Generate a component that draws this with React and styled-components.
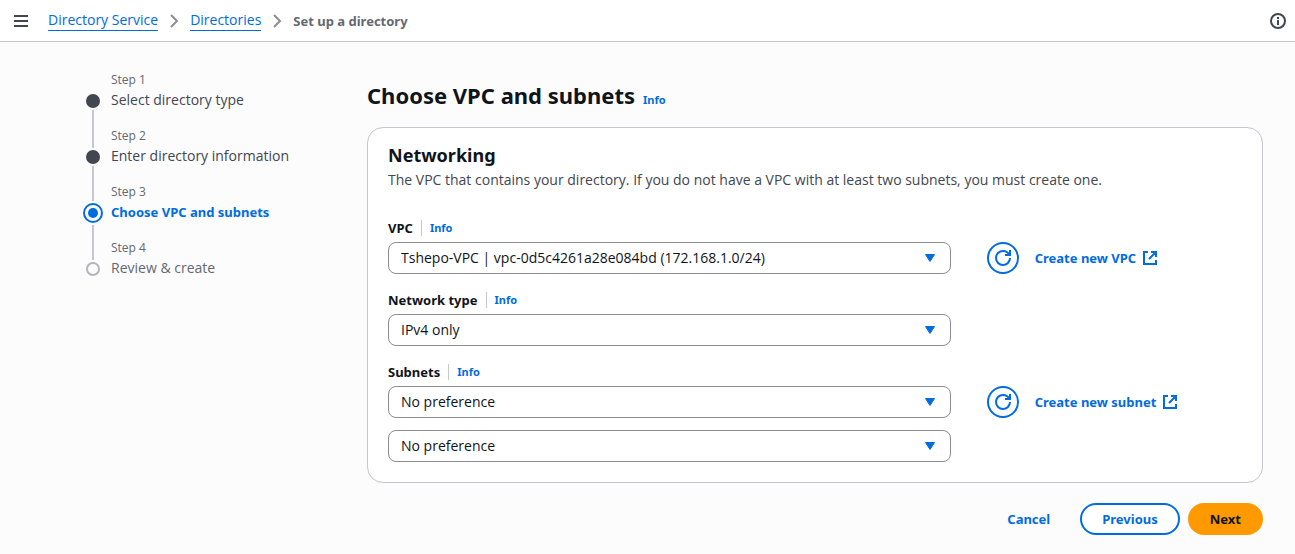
import React from "react";
import styled, { createGlobalStyle, css } from "styled-components";

const blue = "#006ce0";
const ink = "#0f141a";
const slate = "#424650";
const muted = "#656871";
const line = "#c6c6cd";

const GlobalStyle = createGlobalStyle`
  *, *::before, *::after { box-sizing: border-box; }
  body {
    margin: 0;
    background: #fcfcfd;
    color: ${ink};
    font-family: "Open Sans", "Noto Sans", sans-serif;
    font-size: 14px;
    line-height: 20px;
  }
  h1, h2, p, ol { margin: 0; padding: 0; }
  ol { list-style: none; }
  button, select { font: inherit; color: inherit; }
  a { color: ${blue}; text-decoration: none; }
`;

const strong = css`
  font-family: "Noto Sans", "Open Sans", sans-serif;
  font-size: 13px;
  font-weight: 700;
`;

const TopBar = styled.header`
  display: flex;
  align-items: center;
  gap: 20px;
  min-height: 42px;
  padding: 0 9px 0 14px;
  background: #fff;
  border-bottom: 1px solid ${line};
`;

const IconButton = styled.button`
  display: flex;
  padding: 0;
  border: 0;
  background: none;
  color: ${slate};
  cursor: pointer;
`;

const Trail = styled.ol`
  display: flex;
  flex: 1;
  align-items: center;
  gap: 8px;
`;

const Crumb = styled.li`
  display: flex;
  align-items: center;
  gap: 8px;
  color: ${muted};
  ${(p) => p.$current && strong}
  svg { color: #8c8c94; }
`;

const CrumbLink = styled.a`
  border-bottom: 1px solid ${blue};
  line-height: 20px;
`;

const Page = styled.div`
  display: flex;
  padding: 28px 32px 20px 83px;
`;

const Sidebar = styled.nav`
  flex: 0 0 284px;
`;

const StepItem = styled.li`
  display: flex;
  gap: 8px;
`;

const Rail = styled.div`
  display: flex;
  flex-direction: column;
  align-items: center;
  width: 20px;
`;

const Segment = styled.span`
  width: 2px;
  background: ${(p) => (p.$hidden ? "transparent" : line)};
  ${(p) => (p.$lead ? css`height: ${p.$short ? 19 : 22}px;` : css`flex: 1;`)}
`;

const Marker = styled.span`
  display: grid;
  place-items: center;
  width: 14px;
  height: 14px;
  margin: 2px 0;
  border-radius: 50%;
  ${(p) => p.$state === "done" && css`background: ${slate};`}
  ${(p) => p.$state === "todo" && css`border: 2px solid #b4b4bb;`}
  ${(p) => p.$state === "active" && css`
    width: 20px;
    height: 20px;
    border: 2px solid ${blue};
    &::after {
      content: "";
      width: 10px;
      height: 10px;
      border-radius: 50%;
      background: ${blue};
    }
  `}
`;

const StepText = styled.div`
  padding-bottom: 16px;
`;

const StepLabel = styled.div`
  font-size: 12px;
  color: ${muted};
`;

const StepTitle = styled.div`
  color: ${(p) => ({ done: slate, active: blue, todo: muted })[p.$state]};
  ${(p) => p.$state === "active" && strong}
`;

const Content = styled.main`
  flex: 1;
  min-width: 0;
`;

const PageHead = styled.div`
  display: flex;
  align-items: baseline;
  gap: 8px;
  padding: 9px 0 16px;
`;

const PageTitle = styled.h1`
  ${strong}
  font-size: 22px;
  line-height: 32px;
`;

const InfoLink = styled.a`
  ${strong}
  font-size: 11px;
`;

const Card = styled.section`
  padding: 15px 20px 20px;
  background: #fff;
  border: 1px solid ${line};
  border-radius: 16px;
`;

const CardTitle = styled.h2`
  ${strong}
  font-size: 18px;
  line-height: 24px;
`;

const CardText = styled.p`
  margin: 3px 0 28px;
  color: ${slate};
`;

const Fields = styled.div`
  display: grid;
  gap: 16px;
`;

const FieldHead = styled.div`
  display: flex;
  align-items: center;
  gap: 8px;
  margin-bottom: 4px;
  label { ${strong} }
  a {
    padding-left: 8px;
    border-left: 1px solid ${line};
    line-height: 16px;
  }
`;

const FieldRow = styled.div`
  display: grid;
  grid-template-columns: 2fr 1fr;
  gap: 12px 10px;
`;

const SelectBox = styled.div`
  display: grid;
  align-items: center;
  grid-column: 1;
  > * { grid-area: 1 / 1; }
  svg {
    justify-self: end;
    margin-right: 13px;
    color: ${blue};
    pointer-events: none;
  }
`;

const Select = styled.select`
  appearance: none;
  width: 100%;
  height: 32px;
  padding: 0 36px 0 12px;
  background: #fff;
  border: 1px solid #8c8c94;
  border-radius: 8px;
`;

const Actions = styled.div`
  display: flex;
  align-items: center;
  gap: 16px;
  grid-column: 2;
  grid-row: 1;
  padding-left: 26px;
`;

const RoundButton = styled.button`
  display: grid;
  place-items: center;
  width: 32px;
  height: 32px;
  padding: 0;
  border: 2px solid ${blue};
  border-radius: 50%;
  background: #fff;
  color: ${blue};
  cursor: pointer;
`;

const CreateLink = styled.a`
  ${strong}
  display: flex;
  align-items: center;
  gap: 6px;
`;

const Footer = styled.footer`
  display: flex;
  justify-content: flex-end;
  gap: 8px;
  margin-top: 20px;
`;

const Button = styled.button`
  ${strong}
  height: 32px;
  padding: 0 20px;
  border: 2px solid transparent;
  border-radius: 16px;
  background: transparent;
  color: ${blue};
  cursor: pointer;
  ${(p) => p.$kind === "normal" && css`background: #fff; border-color: ${blue};`}
  ${(p) => p.$kind === "primary" && css`background: #ff9900; border-color: #ff9900; color: ${ink};`}
`;

const Icon = ({ children, ...rest }) => (
  <svg width="16" height="16" viewBox="0 0 16 16" fill="none" stroke="currentColor" strokeWidth="2" aria-hidden="true" {...rest}>
    {children}
  </svg>
);

const MenuIcon = () => (
  <Icon width="14" height="14" viewBox="0 0 14 14"><path d="M0 2h14M0 7h14M0 12h14" /></Icon>
);
const InfoIcon = () => (
  <Icon><circle cx="8" cy="8" r="7" /><path d="M8 7v5M8 4v2" /></Icon>
);
const ChevronIcon = () => (
  <Icon><path d="M5 2l6 6-6 6" /></Icon>
);
const CaretIcon = () => (
  <Icon strokeWidth="1" strokeLinejoin="round"><path d="M3.500 4.500h9L8 11.500z" fill="currentColor" /></Icon>
);
const RefreshIcon = () => (
  <Icon>
    <path d="M15 8a7 7 0 0 1-7 7 7 7 0 0 1-7-7 7 7 0 0 1 7-7 6.870 6.870 0 0 1 6.300 4" />
    <path d="M10 5h5V0" />
  </Icon>
);
const ExternalIcon = () => (
  <Icon><path d="M9 2h5v5M7 9l7-7M14 10v4H2V2h4" /></Icon>
);

const steps = [
  { title: "Select directory type", state: "done" },
  { title: "Enter directory information", state: "done" },
  { title: "Choose VPC and subnets", state: "active" },
  { title: "Review & create", state: "todo" },
];

const fields = [
  { id: "vpc", label: "VPC", values: ["Tshepo-VPC | vpc-0d5c4261a28e084bd (172.168.1.0/24)"], create: "Create new VPC" },
  { id: "network-type", label: "Network type", values: ["IPv4 only"] },
  { id: "subnets", label: "Subnets", values: ["No preference", "No preference"], create: "Create new subnet" },
];

function Steps() {
  return (
    <Sidebar aria-label="Steps">
      <ol>
        {steps.map(({ title, state }, i) => (
          <StepItem key={title}>
            <Rail>
              <Segment $lead $short={state === "active"} $hidden={i === 0} />
              <Marker $state={state} />
              <Segment $hidden={i === steps.length - 1} />
            </Rail>
            <StepText>
              <StepLabel>Step {i + 1}</StepLabel>
              <StepTitle $state={state}>{title}</StepTitle>
            </StepText>
          </StepItem>
        ))}
      </ol>
    </Sidebar>
  );
}

function Field({ id, label, values, create }) {
  return (
    <div>
      <FieldHead>
        <label htmlFor={id}>{label}</label>
        <InfoLink href="#info">Info</InfoLink>
      </FieldHead>
      <FieldRow>
        {values.map((value, i) => (
          <SelectBox key={i}>
            <Select id={i ? `${id}-${i + 1}` : id} aria-label={i ? `${label} ${i + 1}` : undefined}>
              <option>{value}</option>
            </Select>
            <CaretIcon />
          </SelectBox>
        ))}
        {create && (
          <Actions>
            <RoundButton type="button" aria-label={`Refresh ${label}`}><RefreshIcon /></RoundButton>
            <CreateLink href="#create">{create}<ExternalIcon /></CreateLink>
          </Actions>
        )}
      </FieldRow>
    </div>
  );
}

export default function App() {
  return (
    <>
      <GlobalStyle />
      <TopBar>
        <IconButton type="button" aria-label="Open navigation"><MenuIcon /></IconButton>
        <Trail>
          <Crumb><CrumbLink href="#service">Directory Service</CrumbLink><ChevronIcon /></Crumb>
          <Crumb><CrumbLink href="#directories">Directories</CrumbLink><ChevronIcon /></Crumb>
          <Crumb $current>Set up a directory</Crumb>
        </Trail>
        <IconButton type="button" aria-label="Help"><InfoIcon /></IconButton>
      </TopBar>
      <Page>
        <Steps />
        <Content>
          <PageHead>
            <PageTitle>Choose VPC and subnets</PageTitle>
            <InfoLink href="#info">Info</InfoLink>
          </PageHead>
          <Card>
            <CardTitle>Networking</CardTitle>
            <CardText>The VPC that contains your directory. If you do not have a VPC with at least two subnets, you must create one.</CardText>
            <Fields>
              {fields.map((f) => <Field key={f.id} {...f} />)}
            </Fields>
          </Card>
          <Footer>
            <Button type="button">Cancel</Button>
            <Button type="button" $kind="normal">Previous</Button>
            <Button type="button" $kind="primary">Next</Button>
          </Footer>
        </Content>
      </Page>
    </>
  );
}
